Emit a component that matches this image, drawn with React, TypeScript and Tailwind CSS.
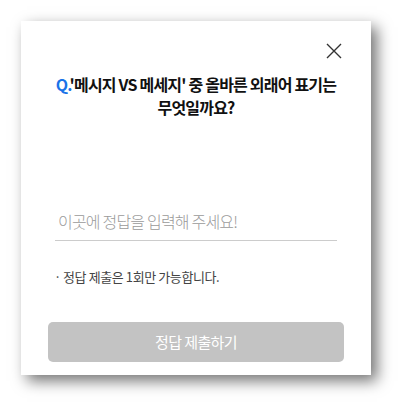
import React from "react";

export default function App() {
  return (
    <div className="w-[413px] h-[418px] bg-white p-[21px]" style={{ fontFamily: '"Noto Sans CJK KR", "Noto Sans", sans-serif' }}>
      <div className="relative w-[350px] h-[354px] bg-white shadow-[6px_6px_14px_rgba(0,0,0,0.55)] flex flex-col">
        <button className="absolute right-[29px] top-[22px] w-4 h-4" aria-label="닫기">
          <svg width="16" height="16" viewBox="0 0 16 16">
            <path d="M1 1L15 15M15 1L1 15" stroke="#333" strokeWidth="1.4" />
          </svg>
        </button>
        <h2 className="pt-[52px] text-center text-[16px] leading-[23px] font-bold text-[#111] tracking-[-0.8px]">
          <span className="text-[#1a73e8]">Q.</span>'메시지 VS 메세지' 중 올바른 외래어 표기는
          <br />
          무엇일까요?
        </h2>
        <div className="mt-[82px] mx-[34px] h-[40px] border-b border-[#cccccc] flex items-center pl-[3px]">
          <input
            className="w-full outline-none bg-transparent text-[16px] tracking-[-0.8px] text-[#333] placeholder:text-[#9a9a9a] font-light"
            placeholder="이곳에 정답을 입력해 주세요!"
          />
        </div>
        <p className="mt-[27px] mx-[33px] text-[13px] leading-[18px] tracking-[-0.4px] text-[#444] flex">
          <span className="w-[9px]">·</span>
          <span>정답 제출은 1회만 가능합니다.</span>
        </p>
        <button className="mt-[36px] mx-[27px] h-[40px] rounded-[5px] bg-[#c3c3c3] text-white text-[15px] tracking-[-0.6px]">
          정답 제출하기
        </button>
      </div>
    </div>
  );
}
